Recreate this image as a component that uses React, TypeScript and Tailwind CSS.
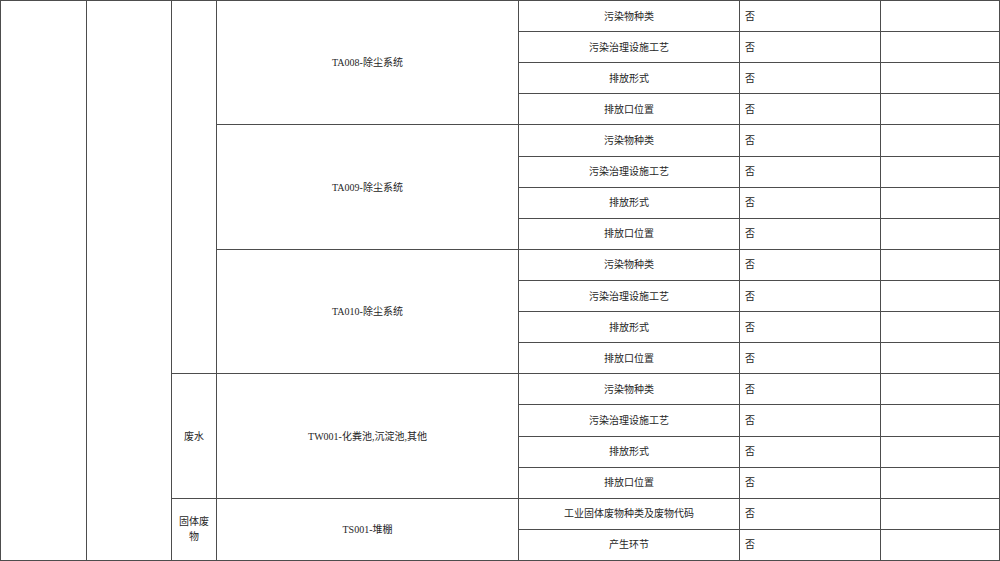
import React from "react";

const items = ["污染物种类", "污染治理设施工艺", "排放形式", "排放口位置"];

const groups = [
  { label: "TA008-除尘系统", rows: items },
  { label: "TA009-除尘系统", rows: items },
  { label: "TA010-除尘系统", rows: items },
  { label: "TW001-化粪池,沉淀池,其他", rows: items },
  { label: "TS001-堆棚", rows: ["工业固体废物种类及废物代码", "产生环节"] },
];

export default function App() {
  return (
    <div className="w-[1000px] h-[561px] bg-white overflow-hidden">
      <div className="flex gap-px p-px bg-[#4d4d4d] w-[1000px] text-[10px] leading-[15px] text-[#262626] font-['Liberation_Serif','Noto_Sans_CJK_SC',serif]">
        <div className="w-[85px] bg-white" />
        <div className="w-[84px] bg-white" />
        <div className="flex flex-col gap-px w-[44px]">
          <div className="h-[372.32px] bg-white" />
          <div className="h-[123.44px] bg-white flex items-center justify-center px-[5px] text-center">废水</div>
          <div className="h-[61.22px] bg-white flex items-center justify-center px-[5px] text-center">固体废物</div>
        </div>
        <div className="flex flex-col gap-px">
          {groups.map((g) => (
            <div key={g.label} className="flex gap-px">
              <div className="w-[301px] bg-white flex items-center justify-center text-center">{g.label}</div>
              <div className="flex flex-col gap-px">
                {g.rows.map((row) => (
                  <div key={row} className="flex gap-px h-[30.11px]">
                    <div className="w-[220px] bg-white flex items-center justify-center">{row}</div>
                    <div className="w-[140px] bg-white flex items-center pl-[5px]">否</div>
                    <div className="w-[118px] bg-white" />
                  </div>
                ))}
              </div>
            </div>
          ))}
        </div>
      </div>
    </div>
  );
}
